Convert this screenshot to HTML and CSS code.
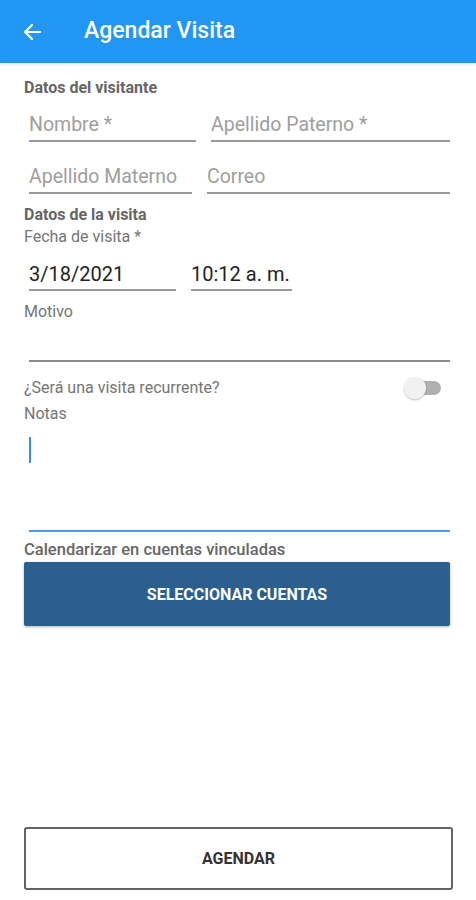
FILE: index.html
```html
<!DOCTYPE html>
<html lang="es">
<head>
  <meta charset="UTF-8" />
  <meta name="viewport" content="width=device-width, initial-scale=1.0"/>
  <title>Agendar Visita</title>
  <link rel="stylesheet" href="styles.css">
</head>
<body>
  <div class="page">
    <header class="toolbar">
      <svg class="back" width="20" height="20" viewBox="0 0 20 20">
        <path d="M18 10H3M10 3L3 10l7 7" fill="none" stroke="#fff" stroke-width="2.2" stroke-linecap="round" stroke-linejoin="round"/>
      </svg>
      <h1>Agendar Visita</h1>
    </header>

    <main class="form">
      <div class="section-title first">Datos del visitante</div>
      <div class="row row-1">
        <div class="field w-167 placeholder">Nombre *</div>
        <div class="field grow placeholder">Apellido Paterno *</div>
      </div>
      <div class="row row-2">
        <div class="field w-163 placeholder">Apellido Materno</div>
        <div class="field grow placeholder">Correo</div>
      </div>

      <div class="section-title">Datos de la visita</div>
      <div class="label tight">Fecha de visita *</div>
      <div class="row row-date">
        <div class="field value w-147">3/18/2021</div>
        <div class="field value w-101">10:12 a. m.</div>
      </div>

      <div class="label">Motivo</div>
      <div class="field motivo"></div>

      <div class="switch-row">
        <span>¿Será una visita recurrente?</span>
        <span class="switch"><span class="thumb"></span></span>
      </div>
      <div class="label notas-label">Notas</div>
      <div class="field notas"><span class="cursor"></span></div>

      <div class="section-title linked">Calendarizar en cuentas vinculadas</div>
      <button class="btn-primary">SELECCIONAR CUENTAS</button>
    </main>

    <footer class="footer">
      <button class="btn-outline">AGENDAR</button>
    </footer>
  </div>
</body>
</html>
```

FILE: styles.css
```css
body {
  margin: 0;
  font-family: Roboto, "Noto Sans", sans-serif;
  background: #fff;
  color: #222;
}

.page {
  min-height: 900px;
  display: flex;
  flex-direction: column;
}

.toolbar {
  height: 63px;
  background: #2196f3;
  display: flex;
  align-items: center;
  padding-left: 22px;
  box-shadow: 0 1px 3px rgba(0, 0, 0, 0.15);
}

.toolbar h1 {
  margin: 0 0 2px 42px;
  color: #fff;
  font-size: 23px;
  font-weight: 500;
}

.back {
  display: block;
}

.form {
  padding: 0 26px 0 24px;
}

.section-title {
  font-size: 16px;
  font-weight: bold;
  color: #666;
  line-height: 18px;
  margin-top: 12px;
}

.section-title.first {
  margin-top: 16px;
}

.section-title.linked {
  font-size: 16.5px;
  font-weight: 500;
  margin-top: 9px;
}

.label {
  font-size: 16px;
  color: #757575;
  line-height: 18px;
  margin-top: 12px;
}

.label.tight {
  margin-top: 4px;
}

.row {
  display: flex;
  gap: 15px;
  margin-left: 5px;
}

.row-1 { margin-top: 16px; }
.row-2 { margin-top: 23px; }
.row-date { margin-top: 16px; }

.field {
  font-size: 19.5px;
  line-height: 24px;
  padding-bottom: 3px;
  border-bottom: 2px solid #9a9a9a;
  white-space: nowrap;
}

.field.value {
  font-size: 20px;
}

.placeholder {
  color: #9e9e9e;
}

.grow { flex: 1; }
.w-167 { width: 167px; }
.w-163 { width: 163px; }
.w-147 { width: 147px; }
.w-101 { width: 101px; }

.motivo {
  margin-left: 5px;
  height: 39px;
  padding: 0;
  border-bottom-color: #8a8a8a;
}

.switch-row {
  display: flex;
  justify-content: space-between;
  align-items: center;
  font-size: 16px;
  color: #757575;
  line-height: 18px;
  margin-top: 17px;
}

.switch {
  position: relative;
  width: 30px;
  height: 14px;
  border-radius: 7px;
  background: #b0b0b0;
  margin-right: 9px;
}

.switch .thumb {
  position: absolute;
  left: -7px;
  top: -4px;
  width: 22px;
  height: 22px;
  border-radius: 50%;
  background: #f1f1f1;
  box-shadow: 0 1px 2px rgba(0, 0, 0, 0.25);
}

.notas-label {
  margin-top: 8px;
}

.notas {
  margin-left: 5px;
  height: 93px;
  padding: 14px 0 0 0;
  border-bottom-color: #4a9de0;
}

.cursor {
  display: block;
  width: 2px;
  height: 26px;
  background: #3b8fd9;
}

.btn-primary {
  display: block;
  width: 100%;
  height: 64px;
  margin-top: 3px;
  background: #2b5f8e;
  color: #fff;
  border: none;
  border-radius: 2px;
  font-family: inherit;
  font-size: 16px;
  font-weight: bold;
  box-shadow: 0 1px 3px rgba(0, 0, 0, 0.3);
}

.footer {
  margin-top: auto;
  padding: 0 23px 10px 24px;
}

.btn-outline {
  display: block;
  width: 100%;
  height: 63px;
  background: #fff;
  color: #333;
  border: 2px solid #5f6468;
  border-radius: 3px;
  font-family: inherit;
  font-size: 16px;
  font-weight: bold;
}
```
